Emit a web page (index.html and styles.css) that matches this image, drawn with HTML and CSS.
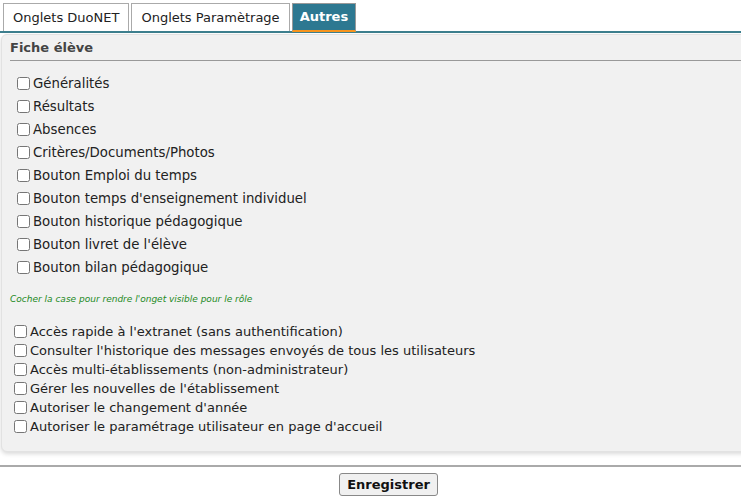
FILE: index.html
```html
<!DOCTYPE html>
<html lang="fr">
<head>
  <meta charset="UTF-8" />
  <title>Autres</title>
  <link rel="stylesheet" href="styles.css">
</head>
<body>
  <div class="tabs">
    <span class="tab">Onglets DuoNET</span>
    <span class="tab">Onglets Paramètrage</span>
    <span class="tab active">Autres</span>
  </div>

  <div class="panel">
    <h2 class="section-title">Fiche élève</h2>
    <div class="rule"></div>

    <div class="list">
      <label class="row"><input type="checkbox">Généralités</label>
      <label class="row"><input type="checkbox">Résultats</label>
      <label class="row"><input type="checkbox">Absences</label>
      <label class="row"><input type="checkbox">Critères/Documents/Photos</label>
      <label class="row"><input type="checkbox">Bouton Emploi du temps</label>
      <label class="row"><input type="checkbox">Bouton temps d'enseignement individuel</label>
      <label class="row"><input type="checkbox">Bouton historique pédagogique</label>
      <label class="row"><input type="checkbox">Bouton livret de l'élève</label>
      <label class="row"><input type="checkbox">Bouton bilan pédagogique</label>
    </div>

    <p class="hint">Cocher la case pour rendre l'onget visible pour le rôle</p>

    <div class="list small">
      <label class="row"><input type="checkbox">Accès rapide à l'extranet (sans authentification)</label>
      <label class="row"><input type="checkbox">Consulter l'historique des messages envoyés de tous les utilisateurs</label>
      <label class="row"><input type="checkbox">Accès multi-établissements (non-administrateur)</label>
      <label class="row"><input type="checkbox">Gérer les nouvelles de l'établissement</label>
      <label class="row"><input type="checkbox">Autoriser le changement d'année</label>
      <label class="row"><input type="checkbox">Autoriser le paramétrage utilisateur en page d'accueil</label>
    </div>
  </div>

  <div class="footer">
    <button class="save-btn">Enregistrer</button>
  </div>
</body>
</html>
```

FILE: styles.css
```css
body {
  margin: 0;
  font-family: "DejaVu Sans", Verdana, sans-serif;
  font-size: 13px;
  color: #222;
  background: #fff;
  width: 741px;
  overflow: hidden;
}
.tabs {
  display: flex;
  gap: 2px;
  padding: 3px 0 0 3px;
  border-bottom: 2px solid #3d7f8e;
}
.tab {
  display: block;
  height: 27px;
  line-height: 27px;
  padding: 0 9px;
  border: 1px solid #aaa;
  border-bottom: none;
  background: #fff;
  color: #222;
}
.tab.active {
  background: #2d7891;
  color: #fff;
  font-weight: bold;
  height: 26px;
  line-height: 26px;
  padding: 0 7px;
  border-color: #999;
  border-bottom: 2px solid #f7941d;
  margin-bottom: -2px;
}
.panel {
  margin: 1px -10px 0 1px;
  background: #f1f1f1;
  border: 1px solid #e2e2e2;
  border-radius: 6px;
  box-shadow: 0 2px 4px rgba(0, 0, 0, 0.15);
  padding: 0 0 15px 0;
}
.section-title {
  margin: 0;
  padding: 3px 0 0 8px;
  height: 19px;
  line-height: 19px;
  font-size: 13px;
  font-weight: bold;
  color: #444;
}
.rule {
  margin: 3px 0 0 8px;
  border-top: 1px solid #999;
}
.list {
  display: flex;
  flex-direction: column;
  padding: 11px 0 0 11px;
  font-size: 13.3px;
}
.row {
  display: flex;
  align-items: center;
  height: 23px;
}
.row input {
  width: 13px;
  height: 13px;
  margin: 0 3px 0 4px;
}
.hint {
  margin: 15px 0 0 8px;
  font-size: 9px;
  font-style: italic;
  color: #1d8a1d;
}
.list.small {
  padding: 18px 0 0 8px;
  font-size: 13px;
}
.list.small .row {
  height: 19px;
}
.footer {
  margin-top: 13px;
  border-top: 2px solid #aaa;
  padding: 6px 0 0 36px;
  text-align: center;
}
.save-btn {
  font-family: "DejaVu Sans", Verdana, sans-serif;
  font-size: 13px;
  font-weight: bold;
  color: #111;
  background: #f0f0f0;
  border: 1px solid #888;
  border-radius: 3px;
  padding: 3px 7px;
}
```
